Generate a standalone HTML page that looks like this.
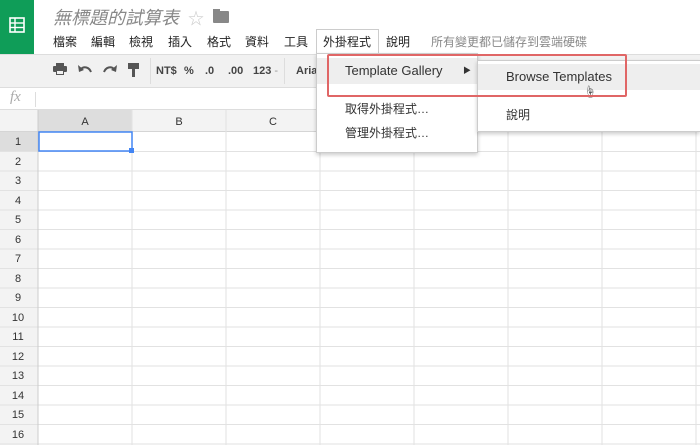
<!DOCTYPE html><html><head><meta charset="utf-8"><style>
*{margin:0;padding:0;box-sizing:border-box}
body{width:700px;height:445px;overflow:hidden;background:#fff;font-family:"Liberation Sans","Noto Sans CJK TC",sans-serif;position:relative;font-size:12px;color:#222}
.a{position:absolute}
.t{white-space:nowrap}
</style></head><body>
<div class="a" style="left:0;top:0;width:34px;height:54px;background:#0f9d58"></div>
<svg class="a" style="left:9px;top:17px" width="16" height="16" viewBox="0 0 16 16"><rect x="1" y="1" width="14" height="14" fill="none" stroke="#fff" stroke-width="1.6"/><line x1="1" y1="6" x2="15" y2="6" stroke="#fff" stroke-width="1.4"/><line x1="1" y1="10.5" x2="15" y2="10.5" stroke="#fff" stroke-width="1.4"/><line x1="6" y1="1" x2="6" y2="15" stroke="#fff" stroke-width="1.4"/></svg>
<div class="a t" style="left:53px;top:4px;font-size:18px;font-style:italic;color:#888">無標題的試算表</div>
<div class="a t" style="left:188px;top:5px;font-size:16px;color:#ccc">☆</div>
<div class="a" style="left:213px;top:11px;width:16px;height:12px;background:#888;border-radius:1px"></div>
<div class="a" style="left:213px;top:9px;width:7px;height:4px;background:#888"></div>
<div class="a t" style="left:53px;top:33px">檔案</div>
<div class="a t" style="left:91px;top:33px">編輯</div>
<div class="a t" style="left:129px;top:33px">檢視</div>
<div class="a t" style="left:168px;top:33px">插入</div>
<div class="a t" style="left:207px;top:33px">格式</div>
<div class="a t" style="left:245px;top:33px">資料</div>
<div class="a t" style="left:284px;top:33px">工具</div>
<div class="a" style="left:316px;top:29px;width:63px;height:25px;border:1px solid #ccc;border-bottom:none;background:#fff"></div>
<div class="a t" style="left:323px;top:33px">外掛程式</div>
<div class="a t" style="left:386px;top:33px">說明</div>
<div class="a t" style="left:431px;top:33px;color:#888">所有變更都已儲存到雲端硬碟</div>
<!-- toolbar -->
<div class="a" style="left:0;top:54px;width:700px;height:34px;background:#f1f1f1;border-top:1px solid #ddd;border-bottom:1px solid #ddd"></div>
<svg class="a" style="left:53px;top:63px" width="14" height="12" viewBox="0 0 14 12"><rect x="3" y="0" width="8" height="3" fill="#555"/><rect x="0" y="3" width="14" height="6" rx="1" fill="#555"/><rect x="3" y="7" width="8" height="5" fill="#555"/><rect x="4" y="8" width="6" height="3" fill="#f1f1f1"/></svg>
<svg class="a" style="left:78px;top:64px" width="14" height="9" viewBox="0 0 14 9"><path d="M13 8 C11 3 6 2 3 5" fill="none" stroke="#555" stroke-width="2"/><path d="M0 1 L1 8 L6 6 Z" fill="#555"/></svg>
<svg class="a" style="left:103px;top:64px" width="14" height="9" viewBox="0 0 14 9"><path d="M1 8 C3 3 8 2 11 5" fill="none" stroke="#555" stroke-width="2"/><path d="M14 1 L13 8 L8 6 Z" fill="#555"/></svg>
<div class="a" style="left:128px;top:63px;width:11px;height:6px;background:#555"></div>
<div class="a" style="left:132px;top:69px;width:3px;height:8px;background:#555"></div>
<div class="a" style="left:150px;top:58px;width:1px;height:26px;background:#ddd"></div>
<div class="a t" style="left:156px;top:65px;font-size:11px;font-weight:bold;color:#444">NT$</div>
<div class="a t" style="left:184px;top:65px;font-size:11px;font-weight:bold;color:#444">%</div>
<div class="a t" style="left:205px;top:65px;font-size:11px;font-weight:bold;color:#444">.0</div>
<div class="a t" style="left:228px;top:65px;font-size:11px;font-weight:bold;color:#444">.00</div>
<div class="a t" style="left:253px;top:65px;font-size:11px;font-weight:bold;color:#444">123 <span style="color:#999;font-weight:normal">-</span></div>
<div class="a" style="left:284px;top:58px;width:1px;height:26px;background:#ddd"></div>
<div class="a t" style="left:296px;top:65px;font-size:11px;font-weight:bold;color:#444">Aria</div>
<!-- formula bar -->
<div class="a t" style="left:10px;top:89px;font-size:15px;font-style:italic;font-family:'Liberation Serif',serif;color:#aaa">fx</div>
<div class="a" style="left:35px;top:92px;width:1px;height:15px;background:#ddd"></div>
<div class="a" style="left:0;top:109px;width:700px;height:1px;background:#ddd"></div>
<!-- grid -->
<svg class="a" style="left:0;top:110px" width="700" height="335">
<rect x="0" y="0" width="700" height="22" fill="#f3f3f3"/>
<rect x="0" y="0" width="38" height="335" fill="#f3f3f3"/>
<rect x="38" y="0" width="94" height="22" fill="#ddd"/>
<rect x="0" y="22" width="38" height="19.5" fill="#ddd"/>
<g stroke="#e2e2e2" stroke-width="1">
<line x1="0" y1="21.5" x2="700" y2="21.5" stroke="#d5d5d5"/>
<line x1="0" y1="41.5" x2="700" y2="41.5"/><line x1="0" y1="61" x2="700" y2="61"/><line x1="0" y1="80.5" x2="700" y2="80.5"/><line x1="0" y1="100" x2="700" y2="100"/><line x1="0" y1="119.5" x2="700" y2="119.5"/><line x1="0" y1="139" x2="700" y2="139"/><line x1="0" y1="158.5" x2="700" y2="158.5"/><line x1="0" y1="178" x2="700" y2="178"/><line x1="0" y1="197.5" x2="700" y2="197.5"/><line x1="0" y1="217" x2="700" y2="217"/><line x1="0" y1="236.5" x2="700" y2="236.5"/><line x1="0" y1="256" x2="700" y2="256"/><line x1="0" y1="275.5" x2="700" y2="275.5"/><line x1="0" y1="295" x2="700" y2="295"/><line x1="0" y1="314.5" x2="700" y2="314.5"/><line x1="0" y1="334" x2="700" y2="334"/>
<line x1="38" y1="0" x2="38" y2="335" stroke="#ccc"/><line x1="132" y1="0" x2="132" y2="335"/><line x1="226" y1="0" x2="226" y2="335"/><line x1="320" y1="0" x2="320" y2="335"/><line x1="414" y1="0" x2="414" y2="335"/><line x1="508" y1="0" x2="508" y2="335"/><line x1="602" y1="0" x2="602" y2="335"/><line x1="696" y1="0" x2="696" y2="335"/>
</g>
<rect x="39" y="22" width="93" height="19" fill="none" stroke="#4285f4" stroke-width="1.5"/>
<rect x="129" y="38" width="5" height="5" fill="#4285f4"/>
<g font-size="11" fill="#333" text-anchor="middle" font-family="Liberation Sans,sans-serif">
<text x="85" y="15">A</text><text x="179" y="15">B</text><text x="273" y="15">C</text>
<text x="18" y="35">1</text><text x="18" y="55">2</text><text x="18" y="74">3</text><text x="18" y="94">4</text><text x="18" y="113">5</text><text x="18" y="133">6</text><text x="18" y="152">7</text><text x="18" y="172">8</text><text x="18" y="191">9</text><text x="18" y="211">10</text><text x="18" y="230">11</text><text x="18" y="250">12</text><text x="18" y="269">13</text><text x="18" y="289">14</text><text x="18" y="308">15</text><text x="18" y="328">16</text>
</g>
</svg>
<!-- menu -->
<div class="a" style="left:316px;top:53px;width:162px;height:100px;background:#fff;border:1px solid #ccc;box-shadow:0 2px 4px rgba(0,0,0,.2)"></div>
<div class="a" style="left:317px;top:58px;width:160px;height:26px;background:#eee"></div>
<div class="a t" style="left:345px;top:63px;font-size:13px;color:#333">Template Gallery</div>
<div class="a t" style="left:463px;top:65px;font-size:8px;color:#333">&#9654;</div>
<div class="a t" style="left:345px;top:100px;font-size:12px;color:#333">取得外掛程式…</div>
<div class="a t" style="left:345px;top:124px;font-size:12px;color:#333">管理外掛程式…</div>
<div class="a" style="left:477px;top:60px;width:223px;height:72px;background:#fff;border:1px solid #ccc;border-right:none;box-shadow:0 2px 4px rgba(0,0,0,.2)"></div>
<div class="a" style="left:478px;top:64px;width:222px;height:26px;background:#eee"></div>
<div class="a t" style="left:506px;top:69px;font-size:13px;color:#333">Browse Templates</div>
<div class="a t" style="left:506px;top:106px;font-size:12px;color:#333">說明</div>
<div class="a t" style="left:584px;top:83px;font-size:12px;color:#333">☝</div>
<div class="a" style="left:327px;top:54px;width:300px;height:43px;border:2px solid #e06666;border-radius:2px"></div>
</body></html>
